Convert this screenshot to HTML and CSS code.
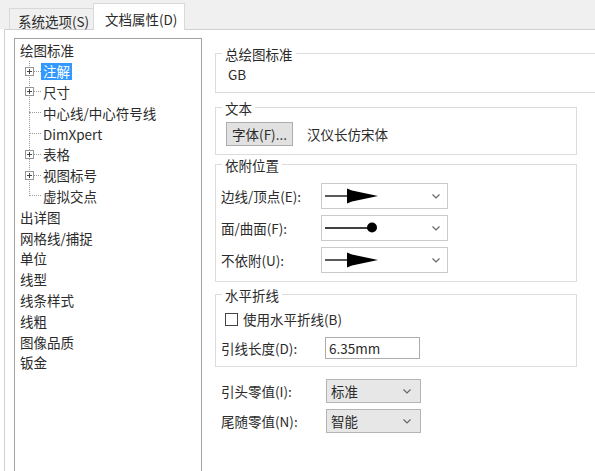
FILE: index.html
```html
<!DOCTYPE html>
<html lang="zh-CN">
<head>
    <meta charset="UTF-8">
    <title>文档属性</title>
    <link rel="stylesheet" href="styles.css">
</head>
<body>

    <div class="tabs">
        <div class="tab tab-back">系统选项(S)</div>
        <div class="tab tab-front">文档属性(D)</div>
    </div>

    <div class="page">
        <div class="tree">
            <div class="node">绘图标准</div>
            <div class="branch">
                <div class="node"><span class="twig"><span class="plus"></span></span><span class="sel">注解</span></div>
                <div class="node"><span class="twig"><span class="plus"></span></span>尺寸</div>
                <div class="node"><span class="twig"></span>中心线/中心符号线</div>
                <div class="node"><span class="twig"></span>DimXpert</div>
                <div class="node"><span class="twig"><span class="plus"></span></span>表格</div>
                <div class="node"><span class="twig"><span class="plus"></span></span>视图标号</div>
                <div class="node"><span class="twig"></span>虚拟交点</div>
            </div>
            <div class="node">出详图</div>
            <div class="node">网格线/捕捉</div>
            <div class="node">单位</div>
            <div class="node">线型</div>
            <div class="node">线条样式</div>
            <div class="node">线粗</div>
            <div class="node">图像品质</div>
            <div class="node">钣金</div>
        </div>

        <div class="props">
            <fieldset class="group g-std">
                <legend>总绘图标准</legend>
                <div class="std-name">GB</div>
            </fieldset>

            <fieldset class="group g-text">
                <legend>文本</legend>
                <div class="font-row">
                    <button type="button" class="btn">字体(F)...</button>
                    <span class="font-name">汉仪长仿宋体</span>
                </div>
            </fieldset>

            <fieldset class="group g-attach">
                <legend>依附位置</legend>
                <div class="row">
                    <span class="label">边线/顶点(E):</span>
                    <div class="combo">
                        <svg width="60" height="18" viewBox="0 0 60 18">
                            <line x1="0" y1="9" x2="24" y2="9" stroke="#000" stroke-width="1.3"/>
                            <path d="M22 1.5 L27 3.5 L53 9 L27 14.5 L22 16.5 Z" fill="#000"/>
                        </svg>
                        <svg class="chev" width="8" height="5" viewBox="0 0 8 5"><polyline points="0.5,0.5 4,4 7.5,0.5" fill="none" stroke="#666" stroke-width="1.2"/></svg>
                    </div>
                </div>
                <div class="row">
                    <span class="label">面/曲面(F):</span>
                    <div class="combo">
                        <svg width="60" height="18" viewBox="0 0 60 18">
                            <line x1="0" y1="9" x2="46" y2="9" stroke="#000" stroke-width="1.3"/>
                            <circle cx="47" cy="8.5" r="5" fill="#000"/>
                        </svg>
                        <svg class="chev" width="8" height="5" viewBox="0 0 8 5"><polyline points="0.5,0.5 4,4 7.5,0.5" fill="none" stroke="#666" stroke-width="1.2"/></svg>
                    </div>
                </div>
                <div class="row">
                    <span class="label">不依附(U):</span>
                    <div class="combo">
                        <svg width="60" height="18" viewBox="0 0 60 18">
                            <line x1="0" y1="9" x2="24" y2="9" stroke="#000" stroke-width="1.3"/>
                            <path d="M22 1.5 L27 3.5 L53 9 L27 14.5 L22 16.5 Z" fill="#000"/>
                        </svg>
                        <svg class="chev" width="8" height="5" viewBox="0 0 8 5"><polyline points="0.5,0.5 4,4 7.5,0.5" fill="none" stroke="#666" stroke-width="1.2"/></svg>
                    </div>
                </div>
            </fieldset>

            <fieldset class="group g-bent">
                <legend>水平折线</legend>
                <div class="check-row">
                    <span class="check"></span>
                    <span class="check-text">使用水平折线(B)</span>
                </div>
                <div class="len-row">
                    <span class="label">引线长度(D):</span>
                    <div class="textbox">6.35mm</div>
                </div>
            </fieldset>

            <div class="zeros">
                <div class="zero-row">
                    <span class="label">引头零值(I):</span>
                    <div class="dropdown">标准
                        <svg class="chev" width="8" height="5" viewBox="0 0 8 5"><polyline points="0.5,0.5 4,4 7.5,0.5" fill="none" stroke="#666" stroke-width="1.2"/></svg>
                    </div>
                </div>
                <div class="zero-row">
                    <span class="label">尾随零值(N):</span>
                    <div class="dropdown">智能
                        <svg class="chev" width="8" height="5" viewBox="0 0 8 5"><polyline points="0.5,0.5 4,4 7.5,0.5" fill="none" stroke="#666" stroke-width="1.2"/></svg>
                    </div>
                </div>
            </div>
        </div>
    </div>

</body>
</html>
```

FILE: styles.css
```css
body {
    margin: 0;
    height: 471px;
    overflow: hidden;
    font-family: "Noto Sans CJK SC", "Noto Sans", sans-serif;
    font-size: 13.5px;
    color: #2b2b2b;
    background-color: #fff;
}

/* tab strip */
.tabs {
    height: 29px;
    display: flex;
    align-items: flex-end;
    padding-left: 9px;
    background-color: #f0f0f0;
}
.tab {
    box-sizing: border-box;
    border: 1px solid #d9d9d9;
    border-bottom: none;
    white-space: nowrap;
}
.tab-back {
    width: 86px;
    height: 21px;
    padding: 4px 0 0 8px;
    line-height: 16px;
    background-color: #f0f0f0;
}
.tab-front {
    width: 92px;
    height: 27px;
    margin-left: -2px;
    margin-bottom: -1px;
    padding: 6px 0 0 11px;
    line-height: 18px;
    background-color: #fff;
    position: relative;
    z-index: 1;
}

.page {
    box-sizing: border-box;
    display: flex;
    margin-left: 4px;
    height: 442px;
    border-top: 1px solid #d0d0d0;
    border-left: 1px solid #d0d0d0;
    background-color: #fff;
}

/* tree */
.tree {
    box-sizing: border-box;
    width: 188px;
    height: 433px;
    margin: 8px 0 0 9px;
    padding: 1px 0 0 5px;
    border: 1px solid #a3a3a3;
    border-bottom: none;
}
.node {
    height: 20.8px;
    display: flex;
    align-items: center;
    white-space: nowrap;
}
.branch {
    margin-left: 9px;
    position: relative;
}
.branch::before {
    content: "";
    position: absolute;
    left: 0;
    top: 0;
    bottom: 10px;
    border-left: 1px dotted #9a9a9a;
}
.twig {
    width: 12px;
    margin-right: 2px;
    border-top: 1px dotted #9a9a9a;
    position: relative;
}
.plus {
    position: absolute;
    left: -4px;
    top: -5px;
    width: 7px;
    height: 7px;
    border: 1px solid #959595;
    background:
        linear-gradient(#444, #444) center / 5px 1px no-repeat,
        linear-gradient(#444, #444) center / 1px 5px no-repeat,
        #fff;
}
.sel {
    margin-left: -2px;
    padding: 0 2px;
    line-height: 17px;
    background-color: #3399ff;
    color: #fff;
}

/* right side */
.props {
    flex: 1;
    min-width: 0;
    margin-left: 13px;
    padding-top: 14px;
    display: flex;
    flex-direction: column;
}
.group {
    margin: 0 18px 0 0;
    padding: 0 5px;
    min-width: 0;
    border: 1px solid #dcdcdc;
}
.group legend {
    margin-left: 1px;
    padding: 2px 3px 0;
    line-height: 16px;
}
.g-std {
    margin-right: 0;
    border-right: none;
    padding-top: 3px;
    padding-bottom: 9px;
}
.std-name {
    margin-left: 7px;
    line-height: 18px;
}
.g-text {
    margin-top: 5px;
    padding-top: 6px;
    padding-bottom: 8px;
}
.font-row {
    display: flex;
    align-items: center;
}
.btn {
    width: 67px;
    height: 24px;
    margin-left: 5px;
    padding: 0;
    font: inherit;
    color: inherit;
    background-color: #e1e1e1;
    border: 1px solid #adadad;
}
.font-name {
    margin-left: 14px;
}
.g-attach {
    padding-top: 10px;
    padding-bottom: 8px;
}
.g-attach .row + .row {
    margin-top: 6px;
}
.row {
    height: 26px;
    display: flex;
    align-items: center;
}
.label {
    width: 100px;
    white-space: nowrap;
}
.combo {
    box-sizing: border-box;
    width: 127px;
    height: 26px;
    padding: 0 7px 0 3px;
    display: flex;
    align-items: center;
    justify-content: space-between;
    border: 1px solid #cacaca;
    background-color: #fff;
}
.g-bent {
    margin-top: 3px;
    padding-top: 7px;
    padding-bottom: 7px;
}
.check-row {
    height: 18px;
    display: flex;
    align-items: center;
}
.check {
    box-sizing: border-box;
    width: 13px;
    height: 13px;
    margin-left: 4px;
    border: 1px solid #444;
    background-color: #fff;
}
.check-text {
    margin-left: 5px;
}
.len-row {
    margin-top: 9px;
    display: flex;
    align-items: center;
}
.len-row .label {
    width: 104px;
}
.textbox {
    box-sizing: border-box;
    width: 95px;
    height: 22px;
    padding-left: 3px;
    line-height: 20px;
    border: 1px solid #acacac;
    background-color: #fff;
}
.zeros {
    margin: 12px 0 0 6px;
}
.zero-row {
    display: flex;
    align-items: center;
}
.zero-row + .zero-row {
    margin-top: 6px;
}
.zero-row .label {
    width: 105px;
}
.dropdown {
    box-sizing: border-box;
    width: 95px;
    height: 24px;
    padding: 0 9px 0 4px;
    display: flex;
    align-items: center;
    justify-content: space-between;
    border: 1px solid #b4b4b4;
    background-color: #e7e7e7;
}
```
